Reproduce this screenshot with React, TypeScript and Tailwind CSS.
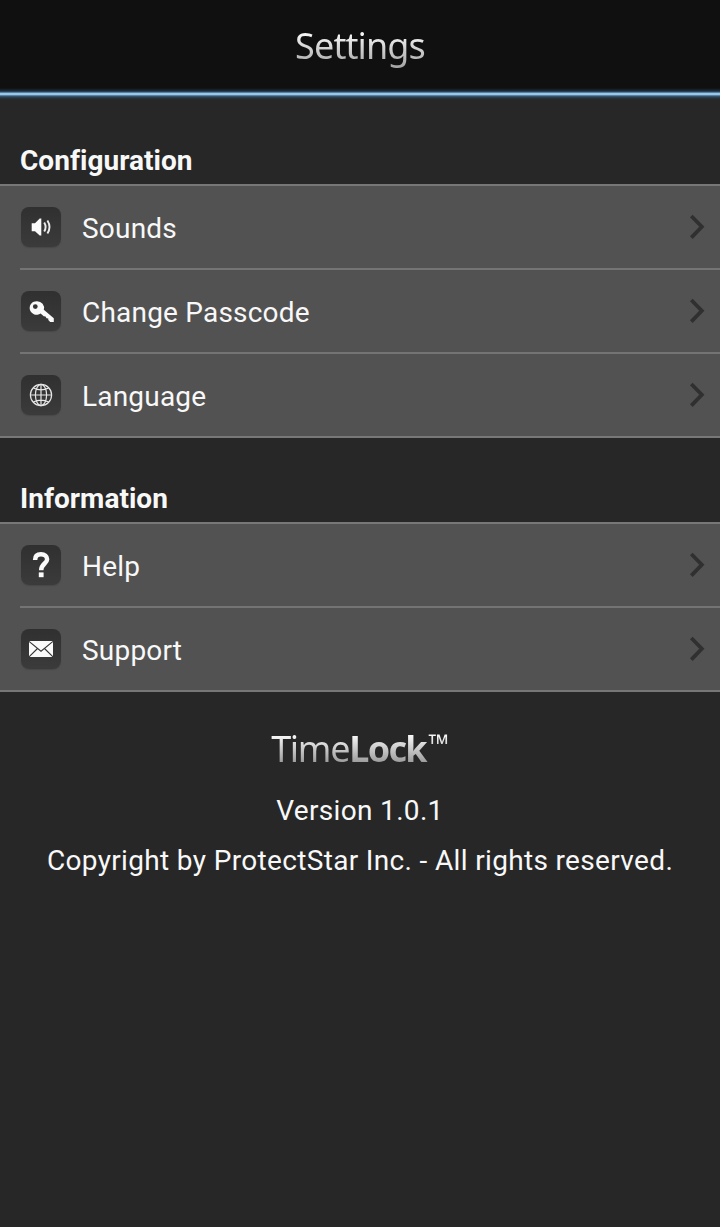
import React from 'react';

interface SettingsItem {
    label: string;
    icon: React.ReactNode;
}

interface SettingsSectionProps {
    title: string;
    items: SettingsItem[];
}

function SoundIcon() {
    return (
        <svg width="40" height="40" viewBox="0 0 40 40" fill="none">
            <path d="M10.7 16.2H14L18.7 11.5H20.3V28.5H18.7L14 24.3H10.7Z" fill="#fafafa" />
            <path d="M23.2 15.5Q26 20 23.2 24.5M26.4 13.5Q30.6 20 26.4 26.5" stroke="#ececec" strokeWidth="1.9" />
        </svg>
    );
}

function KeyIcon() {
    return (
        <svg width="40" height="40" viewBox="0 0 40 40">
            <path
                d="M16 10.2a7 6.8 0 0 1 6.8 8.6L32.8 27.2V31H29.2L27.3 29V27.6L25.5 27.3L24.5 25.6L22.8 25.3L19.6 22.6A7 6.8 0 1 1 16 10.2ZM14.3 13.2a2.4 2.4 0 1 0 0 4.8a2.4 2.4 0 1 0 0-4.8Z"
                fill="#fafafa"
                fillRule="evenodd"
            />
        </svg>
    );
}

function GlobeIcon() {
    return (
        <svg width="40" height="40" viewBox="0 0 40 40" fill="none" stroke="#e6e6e6" strokeWidth="1.2">
            <circle cx="20" cy="20" r="10.6" />
            <ellipse cx="20" cy="20" rx="5.6" ry="10.6" />
            <path d="M20 9.4V30.6M9.4 20H30.6M12.3 13Q20 16.8 27.7 13M12.3 27Q20 23.2 27.7 27" />
        </svg>
    );
}

function HelpIcon() {
    return (
        <svg width="40" height="40" viewBox="0 0 40 40" fill="none">
            <path d="M14.1 14.9C14.1 11.2 16.4 9.3 20 9.3C23.8 9.3 26.1 11.2 26.1 14.2C26.1 18.6 20.2 18.6 20.2 25.2" stroke="#fafafa" strokeWidth="4.5" />
            <rect x="17.8" y="27.4" width="4.8" height="4.8" fill="#fafafa" />
        </svg>
    );
}

function MailIcon() {
    return (
        <svg width="40" height="40" viewBox="0 0 40 40" fill="none">
            <rect x="8" y="12" width="24" height="16" fill="#fafafa" />
            <path d="M8 12.3L20 22.2L32 12.3M8 27.8L16.5 19.5M32 27.8L23.5 19.5" stroke="#353535" strokeWidth="1.1" />
        </svg>
    );
}

function Chevron() {
    return (
        <svg width="18" height="28" viewBox="0 0 18 28" fill="none" className="mr-[13px] shrink-0">
            <path d="M2.3 3L12.8 13.8L2.3 24.6" stroke="#303030" strokeWidth="3.8" />
        </svg>
    );
}

function SettingsSection({ title, items }: SettingsSectionProps) {
    return (
        <section>
            <h2 className="h-[84px] pl-5 pt-11 text-[28px] leading-[34px] font-bold tracking-[0.03px]">{title}</h2>
            <ul className="border-y-2 border-[#777777] bg-[#525252]">
                {items.map((item, i) => (
                    <li key={item.label} className="pl-5">
                        {i > 0 && <div className="h-0.5 bg-[#747474]" />}
                        <div className="flex h-[82px] items-center">
                            <span className="ml-px size-10 shrink-0 rounded-lg bg-linear-to-b from-[#303030] to-[#3b3b3b] shadow-[0_1px_1px_#484848]">
                                {item.icon}
                            </span>
                            <span className="ml-[21px] flex-1 pt-1 text-[28px] leading-[34px] tracking-[0.2px]">{item.label}</span>
                            <Chevron />
                        </div>
                    </li>
                ))}
            </ul>
        </section>
    );
}

const configuration: SettingsItem[] = [
    { label: 'Sounds', icon: <SoundIcon /> },
    { label: 'Change Passcode', icon: <KeyIcon /> },
    { label: 'Language', icon: <GlobeIcon /> },
];

const information: SettingsItem[] = [
    { label: 'Help', icon: <HelpIcon /> },
    { label: 'Support', icon: <MailIcon /> },
];

export default function App() {
    return (
        <div className="min-h-[1227px] w-[720px] bg-[#272727] font-[Roboto,sans-serif] text-[#f8f8f8]">
            <header className="flex h-[88px] justify-center bg-[#101010] pt-[20px]">
                <h1 className="h-[52px] bg-linear-to-b from-white from-20% to-[#a5a5a5] to-90% bg-clip-text font-['Noto_Sans',sans-serif] text-[36px] leading-[52px] font-normal tracking-[-0.9px] text-transparent">
                    Settings
                </h1>
            </header>
            <div className="h-3 bg-[linear-gradient(to_bottom,#101010_0px,#1b2d3b_3px,#30577a_4px,#79a8cc_5px,#bde3fb_6px,#79a8cc_7px,#365b78_8px,#27333d_10px,#272727_12px)]" />

            <main>
                <SettingsSection title="Configuration" items={configuration} />
                <SettingsSection title="Information" items={information} />
            </main>

            <footer className="flex flex-col items-center pt-[31px]">
                <div className="flex h-[52px] bg-linear-to-b from-white from-20% to-[#858585] to-90% bg-clip-text font-['Noto_Sans',sans-serif] text-[36px] leading-[52px] text-transparent">
                    <span className="font-normal tracking-[-1.3px]">Time</span>
                    <span className="font-bold tracking-[-1.7px]">Lock</span>
                    <span className="ml-0.5 text-[27px] leading-[41px] font-normal">™</span>
                </div>
                <p className="mt-[19px] text-[28px] leading-[34px] tracking-[0.32px]">Version 1.0.1</p>
                <p className="mt-4 text-[28px] leading-[34px] tracking-[0.34px] whitespace-nowrap">
                    Copyright by ProtectStar Inc. - All rights reserved.
                </p>
            </footer>
        </div>
    );
}
